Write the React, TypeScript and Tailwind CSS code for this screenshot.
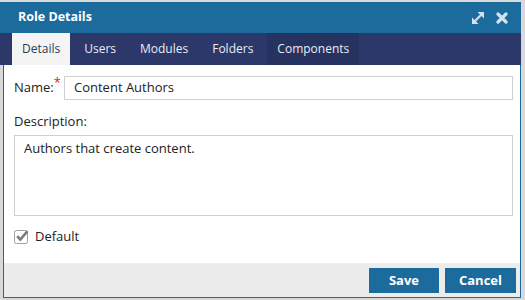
import React from "react";

const font = { fontFamily: '"Open Sans", "Noto Sans", sans-serif' };

function ExpandIcon() {
  return (
    <svg width="14" height="14" viewBox="0 0 14 14" className="block">
      <line x1="3" y1="11" x2="11" y2="3" stroke="#d3e2ee" strokeWidth="2.2" />
      <polygon points="6.5,1 13,1 13,7.5" fill="#d3e2ee" />
      <polygon points="1,6.5 1,13 7.5,13" fill="#d3e2ee" />
    </svg>
  );
}

function CloseIcon() {
  return (
    <svg width="12" height="12" viewBox="0 0 12 12" className="block">
      <path d="M2 2 L10 10 M10 2 L2 10" stroke="#d3e2ee" strokeWidth="3.2" strokeLinecap="round" />
    </svg>
  );
}

function CheckIcon() {
  return (
    <svg width="16" height="15" viewBox="0 0 16 15" className="block">
      <rect x="0.5" y="1.5" width="13" height="13" rx="2" fill="#ffffff" stroke="#a0a0a0" />
      <path d="M3.2 7.2 L6.3 10.6 L13.5 2.2" fill="none" stroke="#7a7a7a" strokeWidth="2.6" />
    </svg>
  );
}

export default function App() {
  const tabs = ["Details", "Users", "Modules", "Folders", "Components"];
  return (
    <div className="w-[525px] h-[300px] bg-[#d9d9d9] pt-[2px] overflow-hidden" style={font}>
      <div className="w-[521px] h-[296px] flex flex-col">
        <div className="h-[31px] bg-[#1c6b9d] flex items-center pl-[18px] pr-[13px]">
          <span className="text-[12.5px] font-bold text-white flex-1">Role Details</span>
          <div className="flex items-center gap-[11px]">
            <ExpandIcon />
            <CloseIcon />
          </div>
        </div>
        <div className="h-[32px] bg-[#2b3869] flex items-stretch pl-[12px] gap-[4px]">
          {tabs.map((t, i) => (
            <div
              key={t}
              className={
                i === 0
                  ? "pl-[10px] pr-[10px] flex items-center text-[12px] bg-[#f4f4f4] text-[#2b3b57]"
                  : i === 4
                  ? "pl-[10px] pr-[10px] flex items-center text-[12px] bg-[#263260] text-[#e9ecf3]"
                  : "pl-[10px] pr-[10px] flex items-center text-[12px] text-[#e9ecf3]"
              }
            >
              {t}
            </div>
          ))}
        </div>
        <div className="flex-1 flex flex-col ml-[3px] border-l border-r border-b border-[#1c6b9d]">
          <div className="flex-1 bg-white pt-[11px] pl-[10px] pr-[7px] text-[13px] text-[#222]">
            <div className="flex items-center h-[24px]">
              <span className="w-[50px] whitespace-nowrap">
                Name:<span className="relative top-[-5px] text-[#e02020]">*</span>
              </span>
              <div className="flex-1 h-[24px] border border-[#cfcfcf] flex items-center pl-[9px]">
                Content Authors
              </div>
            </div>
            <div className="mt-[13px] h-[18px] flex items-center">Description:</div>
            <div className="mt-[4px] h-[81px] border border-[#cfcfcf] pl-[9px] pt-[3px]">
              Authors that create content.
            </div>
            <div className="mt-[13px] flex items-center gap-[5px] h-[15px]">
              <CheckIcon />
              <span>Default</span>
            </div>
          </div>
          <div className="h-[34px] bg-[#ececec] flex justify-end items-start pt-[5px] pr-[4px] gap-[6px]">
            <div className="w-[70px] h-[25px] bg-[#1c6b9d] text-white font-bold text-[13px] flex items-center justify-center">
              Save
            </div>
            <div className="w-[71px] h-[25px] bg-[#1c6b9d] text-white font-bold text-[13px] flex items-center justify-center">
              Cancel
            </div>
          </div>
        </div>
      </div>
    </div>
  );
}
